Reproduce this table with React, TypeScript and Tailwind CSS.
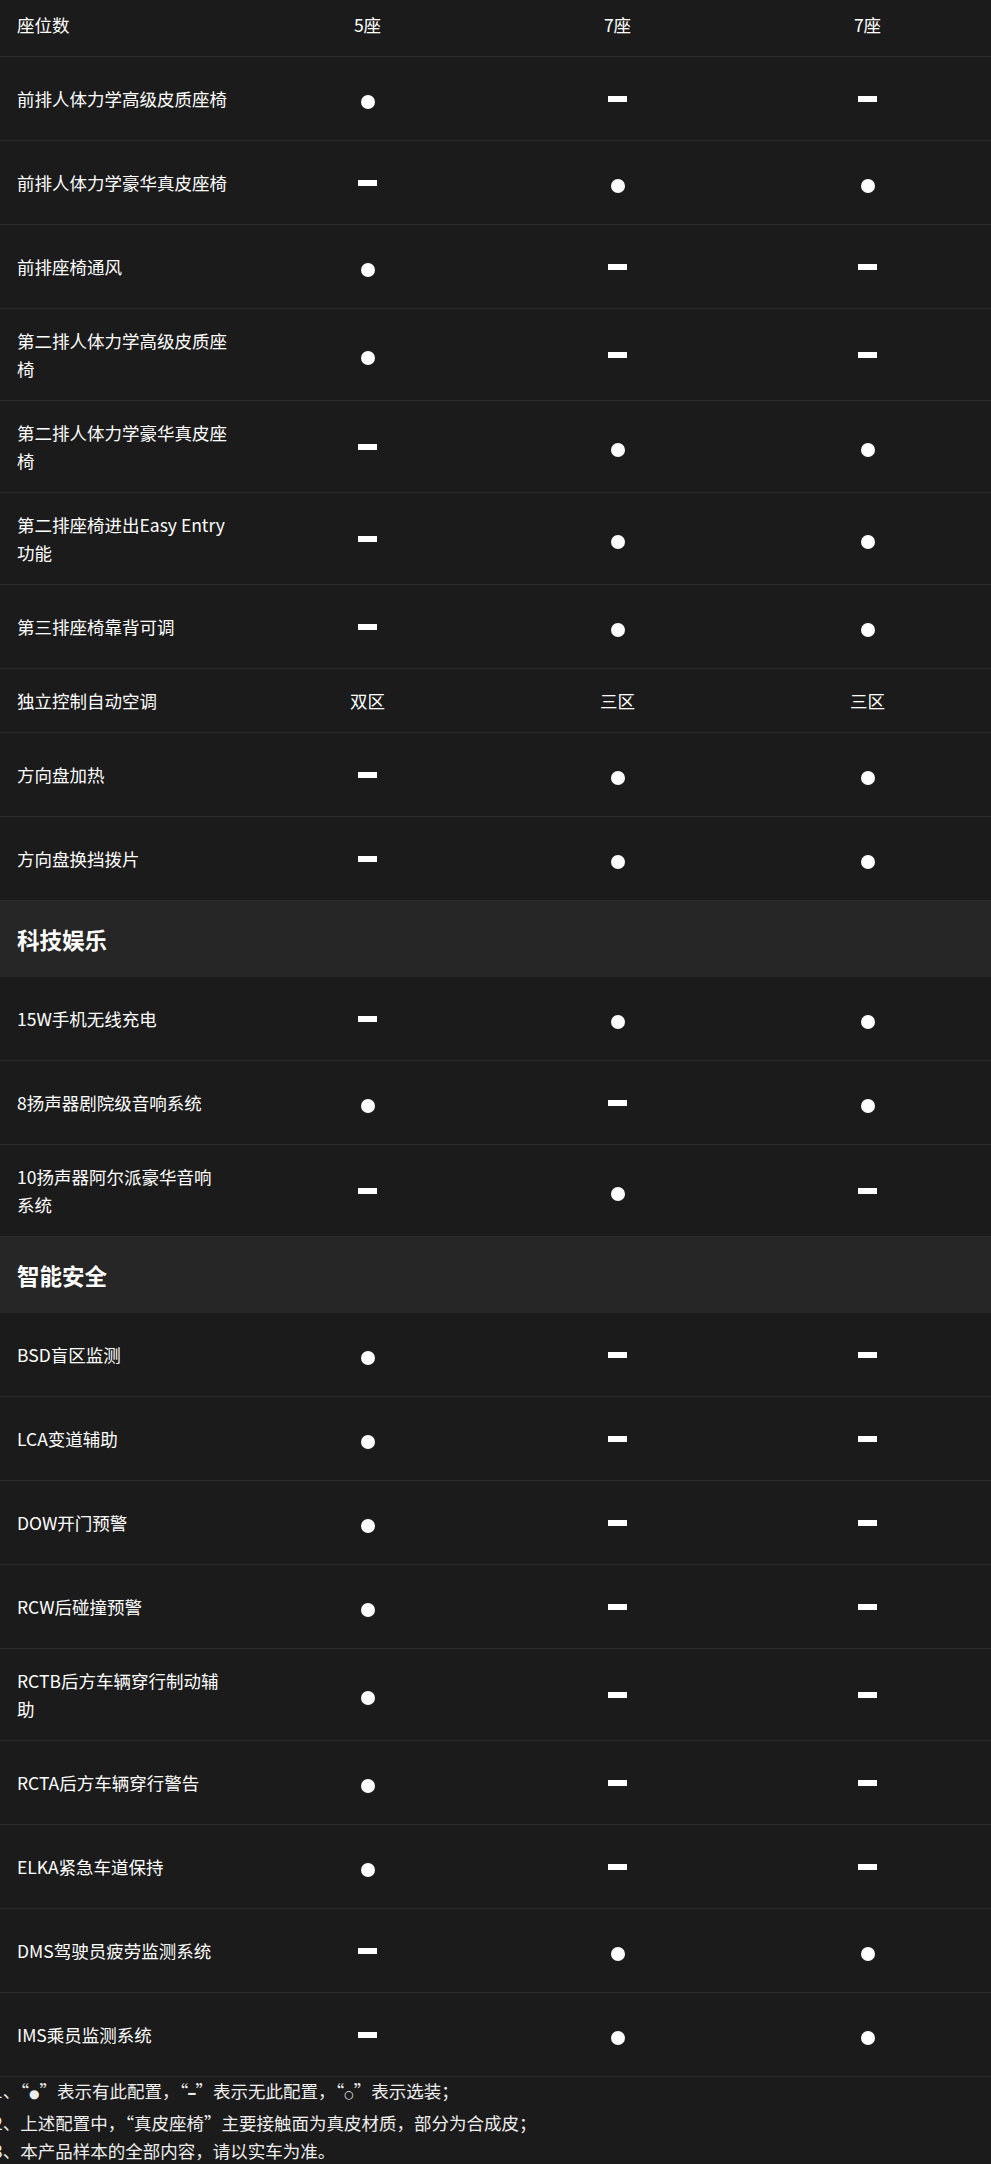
import React from 'react';

type Cell = 'c' | 'd' | string;

interface SpecRow {
  label: string;
  values: Cell[];
}

interface Section {
  title?: string;
  rows: SpecRow[];
}

const sections: Section[] = [
  {
    rows: [
      { label: '座位数', values: ['5座', '7座', '7座'] },
      { label: '前排人体力学高级皮质座椅', values: ['c', 'd', 'd'] },
      { label: '前排人体力学豪华真皮座椅', values: ['d', 'c', 'c'] },
      { label: '前排座椅通风', values: ['c', 'd', 'd'] },
      { label: '第二排人体力学高级皮质座椅', values: ['c', 'd', 'd'] },
      { label: '第二排人体力学豪华真皮座椅', values: ['d', 'c', 'c'] },
      { label: '第二排座椅进出Easy Entry功能', values: ['d', 'c', 'c'] },
      { label: '第三排座椅靠背可调', values: ['d', 'c', 'c'] },
      { label: '独立控制自动空调', values: ['双区', '三区', '三区'] },
      { label: '方向盘加热', values: ['d', 'c', 'c'] },
      { label: '方向盘换挡拨片', values: ['d', 'c', 'c'] },
    ],
  },
  {
    title: '科技娱乐',
    rows: [
      { label: '15W手机无线充电', values: ['d', 'c', 'c'] },
      { label: '8扬声器剧院级音响系统', values: ['c', 'd', 'c'] },
      { label: '10扬声器阿尔派豪华音响系统', values: ['d', 'c', 'd'] },
    ],
  },
  {
    title: '智能安全',
    rows: [
      { label: 'BSD盲区监测', values: ['c', 'd', 'd'] },
      { label: 'LCA变道辅助', values: ['c', 'd', 'd'] },
      { label: 'DOW开门预警', values: ['c', 'd', 'd'] },
      { label: 'RCW后碰撞预警', values: ['c', 'd', 'd'] },
      { label: 'RCTB后方车辆穿行制动辅助', values: ['c', 'd', 'd'] },
      { label: 'RCTA后方车辆穿行警告', values: ['c', 'd', 'd'] },
      { label: 'ELKA紧急车道保持', values: ['c', 'd', 'd'] },
      { label: 'DMS驾驶员疲劳监测系统', values: ['d', 'c', 'c'] },
      { label: 'IMS乘员监测系统', values: ['d', 'c', 'c'] },
    ],
  },
];

// full-width quotes, like the original's CJK font
const Q: React.FC<{ children: React.ReactNode }> = ({ children }) => (
  <span className="[font-feature-settings:'fwid']">
    “<span className="[font-feature-settings:normal]">{children}</span>”
  </span>
);

const ValueCell: React.FC<{ value: Cell }> = ({ value }) => {
  if (value === 'c') {
    return (
      <div className="flex h-[48px] items-center justify-center">
        <span className="mt-[6px] block h-[14px] w-[14px] rounded-full bg-white" />
      </div>
    );
  }
  if (value === 'd') {
    return (
      <div className="flex h-[48px] items-center justify-center">
        <span className="block h-[6px] w-[19px] bg-white" />
      </div>
    );
  }
  return <div className="text-center">{value}</div>;
};

const Row: React.FC<{ row: SpecRow }> = ({ row }) => (
  <div className="grid grid-cols-[242.5px_250px_250px_250px] items-center border-b border-[#2b2b2b] py-[17.5px]">
    <div className="pl-[17px]">
      <div className="w-[211px]">{row.label}</div>
    </div>
    {row.values.map((v, i) => (
      <ValueCell key={i} value={v} />
    ))}
  </div>
);

export default function App() {
  return (
    <div className="min-h-[2164px] w-[991px] overflow-hidden bg-[#1b1b1b] font-['Noto_Sans_CJK_SC',sans-serif] text-[17.5px] leading-[28px] text-white">
      <div className="-mt-[7px]">
        {sections.map((section, si) => (
          <div key={si}>
            {section.title && (
              <div className="flex h-[76px] items-center bg-[#262626] pl-[17px] text-[22.5px] font-bold">
                {section.title}
              </div>
            )}
            {section.rows.map((row) => (
              <Row key={row.label} row={row} />
            ))}
          </div>
        ))}
        <div className="-ml-[7px] text-[#eeeeee]">
          <p className="whitespace-nowrap">
            1、<Q><span className="font-['DejaVu_Sans',sans-serif] text-[12px]">●</span></Q>表示有此配置，<Q><span className="font-['DejaVu_Sans',sans-serif] text-[12px] font-bold">━</span></Q>表示无此配置，<Q><span className="font-['DejaVu_Sans',sans-serif] text-[11px]">○</span></Q>表示选装；
          </p>
          <p className="whitespace-nowrap">
            2、上述配置中，<Q>真皮座椅</Q>主要接触面为真皮材质，部分为合成皮；
          </p>
          <p className="whitespace-nowrap">3、本产品样本的全部内容，请以实车为准。</p>
        </div>
      </div>
    </div>
  );
}
